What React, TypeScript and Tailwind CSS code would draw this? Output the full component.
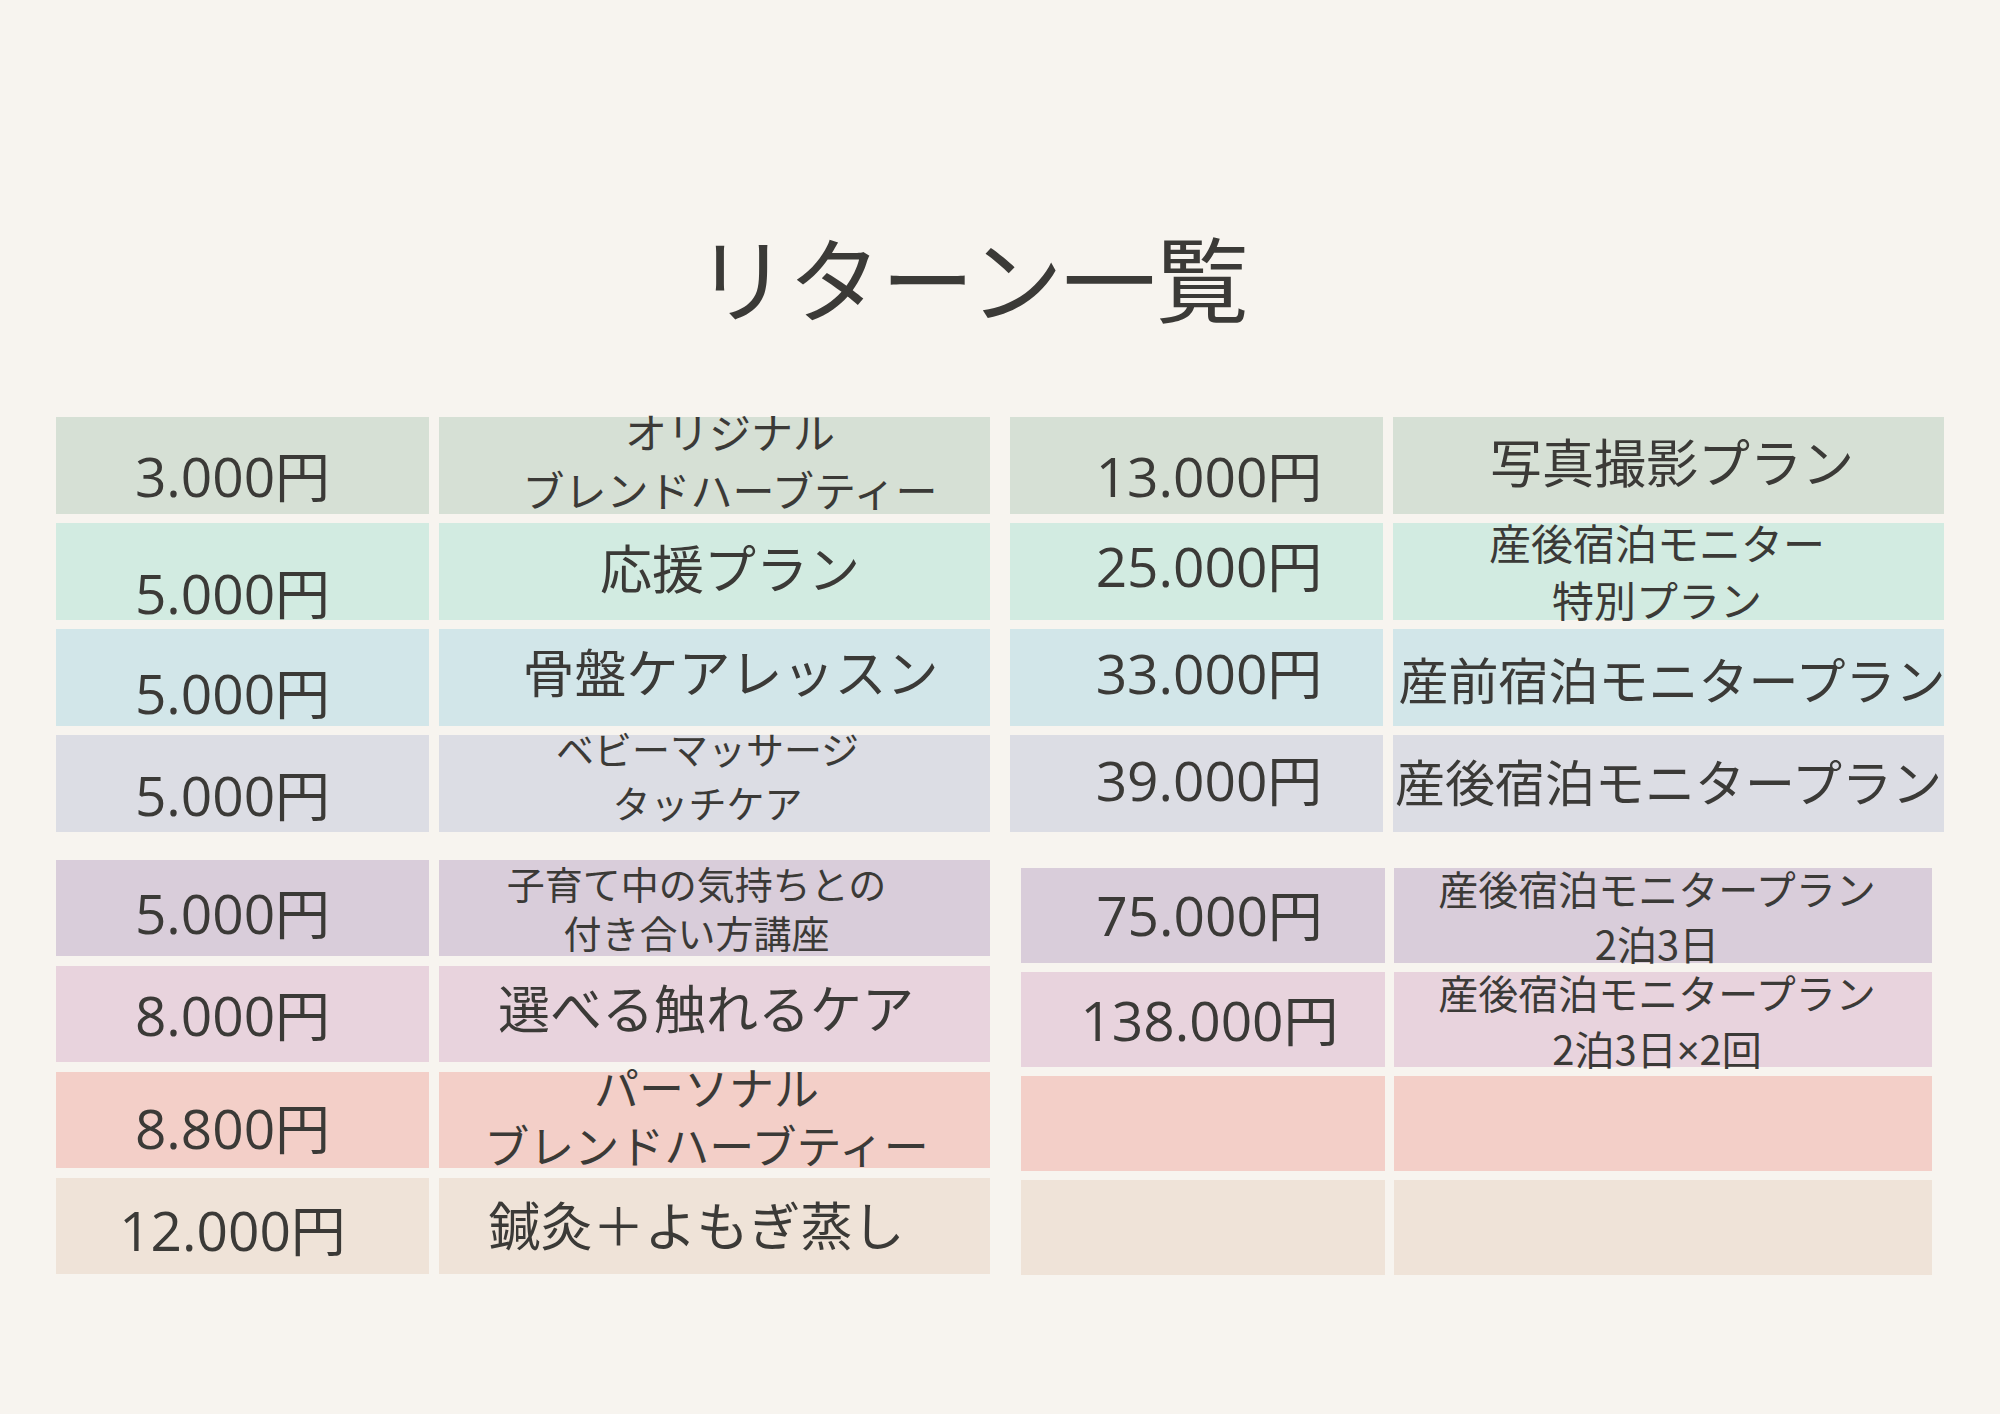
import React from "react";

type Row = {
  bg: string;
  price?: string;
  pText?: string;
  lines?: React.ReactNode[];
  tCell?: string;
  tText?: string;
};

const JP = "font-['Noto_Sans_CJK_JP',sans-serif]";
const NUM = "font-['Open_Sans','Noto_Sans_CJK_JP',sans-serif]";

const leftTop: Row[] = [
  { bg: "bg-[#d6e0d5]", price: "3.000円", pText: "mt-[31px]", lines: ["オリジナル", "ブレンドハーブティー"], tCell: "pl-[31px]", tText: "text-[42px] leading-[58px] -mt-[15px]" },
  { bg: "bg-[#d2ebe1]", price: "5.000円", pText: "mt-[42px]", lines: ["応援プラン"], tCell: "pl-[31px]", tText: "text-[52px] leading-[52px] mt-[18px]" },
  { bg: "bg-[#d2e6e9]", price: "5.000円", pText: "mt-[36px]", lines: ["骨盤ケアレッスン"], tCell: "pl-[32px]", tText: "text-[52px] leading-[52px] mt-[16px]" },
  { bg: "bg-[#dcdde4]", price: "5.000円", pText: "mt-[32px]", lines: ["ベビーマッサージ", "タッチケア"], tCell: "pr-[14px]", tText: "text-[38px] leading-[54px] -mt-[14px]" },
];

const leftBottom: Row[] = [
  { bg: "bg-[#d9cdda]", price: "5.000円", pText: "mt-[25px]", lines: ["子育て中の気持ちとの", "付き合い方講座"], tCell: "pr-[36px]", tText: "text-[38px] leading-[49px] -mt-[2px]" },
  { bg: "bg-[#e8d3dd]", price: "8.000円", pText: "mt-[21px]", lines: ["選べる触れるケア"], tCell: "pr-[17px]", tText: "text-[52px] leading-[52px] mt-[15px]" },
  { bg: "bg-[#f3cfc8]", price: "8.800円", pText: "mt-[28px]", lines: ["パーソナル", "ブレンドハーブティー"], tCell: "pr-[16px]", tText: "text-[45px] leading-[58px] -mt-[14px]" },
  { bg: "bg-[#efe3d8]", price: "12.000円", pText: "mt-[24px]", lines: ["鍼灸＋よもぎ蒸し"], tCell: "pr-[36px]", tText: "text-[52px] leading-[52px] mt-[20px]" },
];

const rightTop: Row[] = [
  { bg: "bg-[#d6e0d5]", price: "13.000円", pText: "mt-[31px]", lines: ["写真撮影プラン"], tCell: "pl-[7px]", tText: "text-[52px] leading-[52px] mt-[18px]" },
  { bg: "bg-[#d2ebe1]", price: "25.000円", pText: "mt-[15px]", lines: ["産後宿泊モニター", "特別プラン"], tCell: "pr-[23px]", tText: "text-[42px] leading-[57px] -mt-[10px]" },
  { bg: "bg-[#d2e6e9]", price: "33.000円", pText: "mt-[16px]", lines: ["産前宿泊モニタープラン"], tCell: "pl-[7px]", tText: "text-[50px] leading-[50px] mt-[24px]" },
  { bg: "bg-[#dcdde4]", price: "39.000円", pText: "mt-[17px]", lines: ["産後宿泊モニタープラン"], tCell: "", tText: "text-[50px] leading-[50px] mt-[20px]" },
];

const rightBottom: Row[] = [
  { bg: "bg-[#d9cdda]", price: "75.000円", pText: "mt-[19px]", lines: ["産後宿泊モニタープラン", "2泊3日"], tCell: "pr-[12px]", tText: "text-[40px] leading-[55px] -mt-[7px]" },
  {
    bg: "bg-[#e8d3dd]",
    price: "138.000円",
    pText: "mt-[20px]",
    lines: [
      "産後宿泊モニタープラン",
      <>
        2泊3日<span className="font-['Noto_Sans',sans-serif]">×</span>2回
      </>,
    ],
    tCell: "pr-[12px]",
    tText: "text-[40px] leading-[56px] -mt-[8px]",
  },
  { bg: "bg-[#f3cfc8]" },
  { bg: "bg-[#efe3d8]" },
];

function Group({
  rows,
  colCls,
  rowCls,
  priceCls,
  textCls,
  pCell,
}: {
  rows: Row[];
  colCls: string;
  rowCls: string;
  priceCls: string;
  textCls: string;
  pCell: string;
}) {
  return (
    <div className={`flex flex-col ${colCls}`}>
      {rows.map((r, i) => (
        <div key={i} className={`flex ${rowCls}`}>
          <div className={`${priceCls} ${r.bg} ${pCell} flex flex-col items-center shrink-0`}>
            {r.price && (
              <div className={`${NUM} ${r.pText} text-[55px] leading-[56px] whitespace-nowrap`}>{r.price}</div>
            )}
          </div>
          <div className={`${textCls} ${r.bg} ${r.tCell ?? ""} flex flex-col items-center shrink-0`}>
            {r.lines && (
              <div className={`${JP} ${r.tText} flex flex-col items-center`}>
                {r.lines.map((l, j) => (
                  <div key={j} className="whitespace-nowrap">
                    {l}
                  </div>
                ))}
              </div>
            )}
          </div>
        </div>
      ))}
    </div>
  );
}

export default function App() {
  return (
    <div className="w-[2000px] h-[1414px] bg-[#f7f4ef] text-[#3b3a37] overflow-hidden">
      <div className={`${JP} pt-[229px] pr-[56px] text-center text-[93px] leading-[93px]`}>リターン一覧</div>
      <div className="mt-[95px] px-[56px] flex gap-[20px]">
        <div className="w-[934px] flex flex-col gap-[28px]">
          <Group rows={leftTop} colCls="gap-[9px]" rowCls="h-[97px] gap-[10px]" priceCls="w-[373px]" textCls="w-[551px]" pCell="pr-[20px]" />
          <Group rows={leftBottom} colCls="gap-[10px]" rowCls="h-[96px] gap-[10px]" priceCls="w-[373px]" textCls="w-[551px]" pCell="pr-[20px]" />
        </div>
        <div className="w-[934px] flex flex-col gap-[36px]">
          <Group rows={rightTop} colCls="gap-[9px]" rowCls="h-[97px] gap-[10px]" priceCls="w-[373px]" textCls="w-[551px]" pCell="pl-[25px]" />
          <div className="ml-[11px]">
            <Group rows={rightBottom} colCls="gap-[9px]" rowCls="h-[95px] gap-[9px]" priceCls="w-[364px]" textCls="w-[538px]" pCell="pl-[13px]" />
          </div>
        </div>
      </div>
    </div>
  );
}
